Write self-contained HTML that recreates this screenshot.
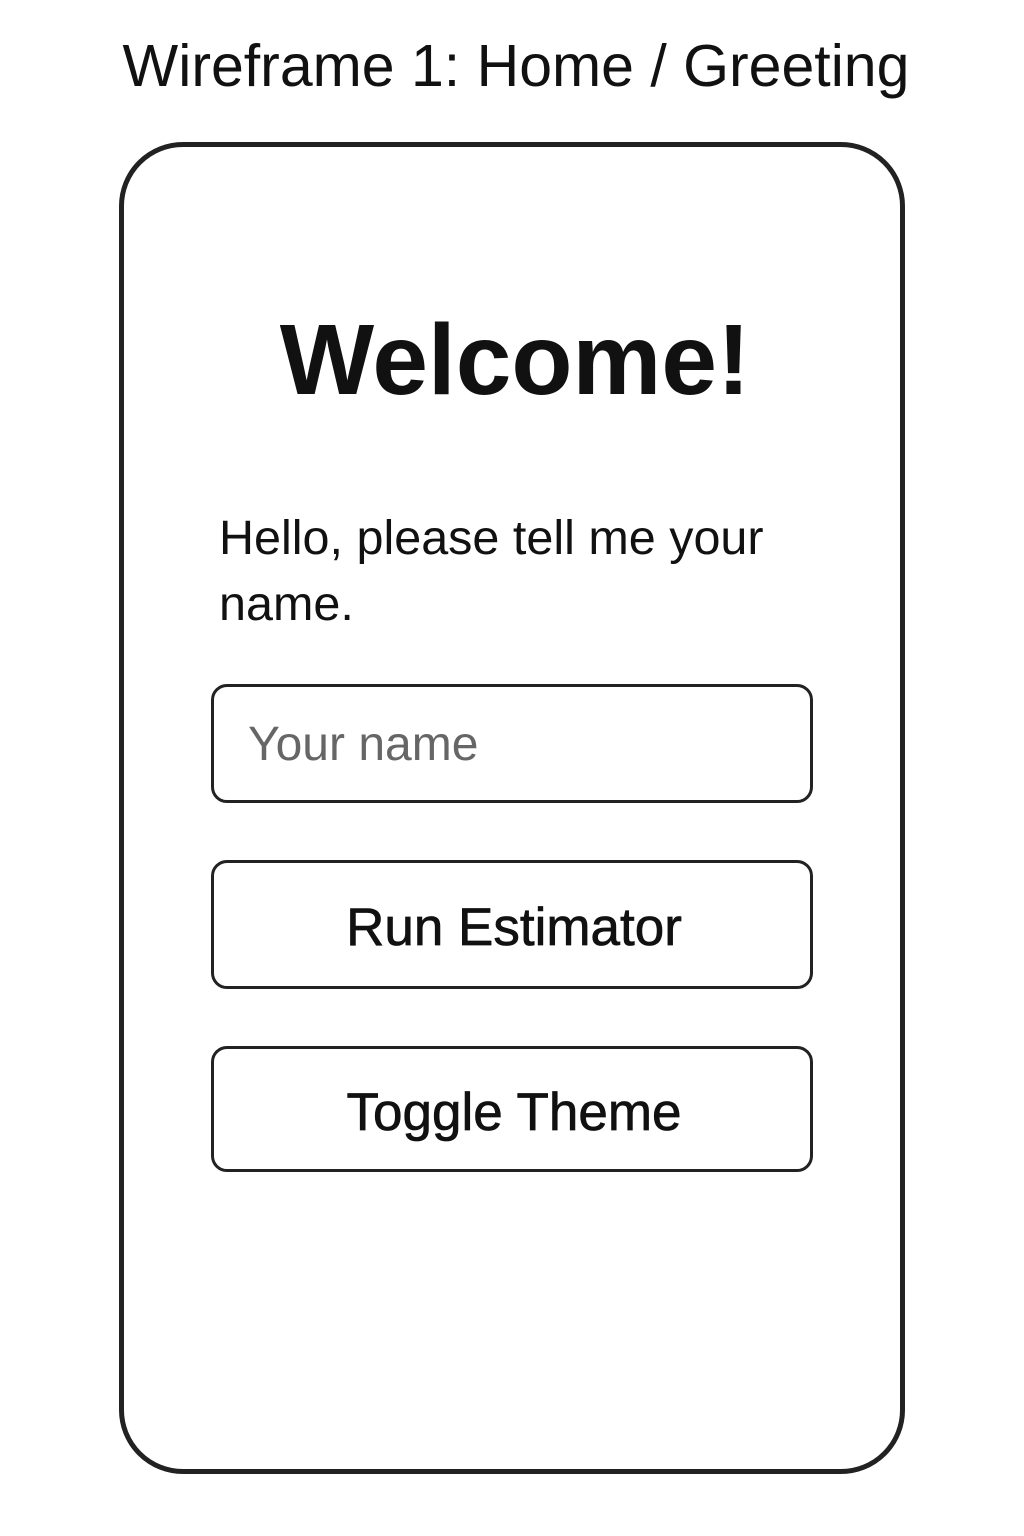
<!DOCTYPE html>
<html><head><meta charset="utf-8"><style>
*{margin:0;padding:0;box-sizing:border-box}
body{width:1024px;height:1536px;background:#fff;position:relative;font-family:"Liberation Sans",sans-serif;color:#111;overflow:hidden}
.title{position:absolute;top:30px;left:0;width:1032px;text-align:center;font-size:59px;line-height:72px}
.phone{position:absolute;left:119px;top:142px;width:786px;height:1332px;border:5px solid #222;border-radius:64px}
.welcome{position:absolute;top:305px;left:0;width:1030px;text-align:center;font-size:100px;font-weight:bold;line-height:110px}
.hello{position:absolute;left:219px;top:505px;font-size:48.5px;line-height:66px;width:600px}
.box{position:absolute;left:211px;width:602px;border:3.5px solid #222;border-radius:16px}
.inp{top:684px;height:119px;font-size:48px;color:#666;padding-left:34px;line-height:116px}
.btn{text-align:center;font-size:53px;color:#111;padding-left:4px;-webkit-text-stroke:0.7px #111}
.b1{top:860px;height:129px;line-height:130px}
.b2{top:1046px;height:126px;line-height:128px}
</style></head><body>
<div class="title">Wireframe 1: Home / Greeting</div>
<div class="phone"></div>
<div class="welcome">Welcome!</div>
<div class="hello">Hello, please tell me your name.</div>
<div class="box inp">Your name</div>
<div class="box btn b1">Run Estimator</div>
<div class="box btn b2">Toggle Theme</div>
</body></html>
